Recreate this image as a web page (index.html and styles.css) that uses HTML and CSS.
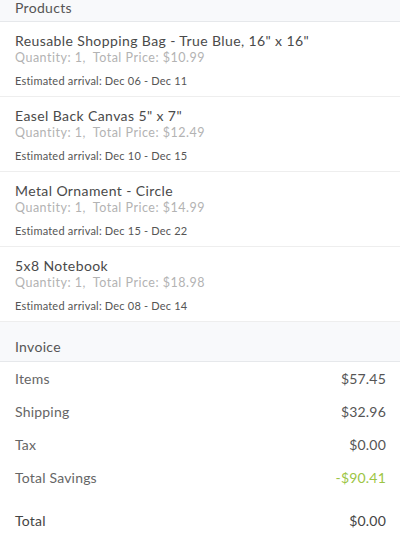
FILE: index.html
```html
<!DOCTYPE html>
<html lang="en">
<head>
    <meta charset="UTF-8">
    <meta name="viewport" content="width=device-width, initial-scale=1.0">
    <title>Order Summary</title>
    <link rel="stylesheet" href="styles.css">
</head>
<body>

    <div class="section-header top-header">Products</div>

    <div class="product">
        <div class="product-title">Reusable Shopping Bag - True Blue, 16" x 16"</div>
        <div class="product-meta">Quantity: 1,&nbsp;&nbsp;Total Price: $10.99</div>
        <div class="product-arrival">Estimated arrival: Dec 06 - Dec 11</div>
    </div>

    <div class="product">
        <div class="product-title">Easel Back Canvas 5" x 7"</div>
        <div class="product-meta">Quantity: 1,&nbsp;&nbsp;Total Price: $12.49</div>
        <div class="product-arrival">Estimated arrival: Dec 10 - Dec 15</div>
    </div>

    <div class="product">
        <div class="product-title">Metal Ornament - Circle</div>
        <div class="product-meta">Quantity: 1,&nbsp;&nbsp;Total Price: $14.99</div>
        <div class="product-arrival">Estimated arrival: Dec 15 - Dec 22</div>
    </div>

    <div class="product">
        <div class="product-title">5x8 Notebook</div>
        <div class="product-meta">Quantity: 1,&nbsp;&nbsp;Total Price: $18.98</div>
        <div class="product-arrival">Estimated arrival: Dec 08 - Dec 14</div>
    </div>

    <div class="section-header">Invoice</div>

    <div class="invoice">
        <div class="invoice-row">
            <span>Items</span>
            <span class="amount">$57.45</span>
        </div>
        <div class="invoice-row">
            <span>Shipping</span>
            <span class="amount">$32.96</span>
        </div>
        <div class="invoice-row">
            <span>Tax</span>
            <span class="amount">$0.00</span>
        </div>
        <div class="invoice-row">
            <span>Total Savings</span>
            <span class="amount savings">-$90.41</span>
        </div>
        <div class="invoice-row total-row">
            <span>Total</span>
            <span class="amount">$0.00</span>
        </div>
    </div>

</body>
</html>
```

FILE: styles.css
```css
body {
    font-family: Lato, "Noto Sans", sans-serif;
    margin: 0;
    padding: 0;
    background-color: #ffffff;
    color: #444444;
}

.section-header {
    background-color: #f8f9fb;
    border-bottom: 1px solid #e6e8eb;
    padding: 16px 15px 5px;
    font-size: 14px;
    line-height: 18px;
    letter-spacing: 0.3px;
    color: #555555;
}

.top-header {
    padding-top: 0;
    padding-bottom: 0;
    height: 22px;
    line-height: 16px;
    box-sizing: border-box;
}

.product {
    padding: 10px 15px 8px;
    border-bottom: 1px solid #eeeeee;
}

.product-title {
    font-size: 14px;
    line-height: 18px;
    letter-spacing: 0.4px;
    color: #4a4a4a;
}

.product-meta {
    font-size: 12.5px;
    line-height: 15px;
    letter-spacing: 0.5px;
    color: #b3b3b3;
}

.product-arrival {
    font-size: 11px;
    line-height: 14px;
    letter-spacing: 0.2px;
    margin-top: 9px;
    color: #555555;
}

.invoice {
    padding-top: 1px;
}

.invoice-row {
    display: flex;
    justify-content: space-between;
    padding: 7px 14px 8px 15px;
    font-size: 14px;
    line-height: 18px;
    letter-spacing: 0.2px;
    color: #666666;
}

.amount {
    color: #555555;
}

.savings {
    color: #9cc545;
}

.total-row {
    margin-top: 10px;
    color: #444444;
}

.total-row .amount {
    color: #444444;
}
```
